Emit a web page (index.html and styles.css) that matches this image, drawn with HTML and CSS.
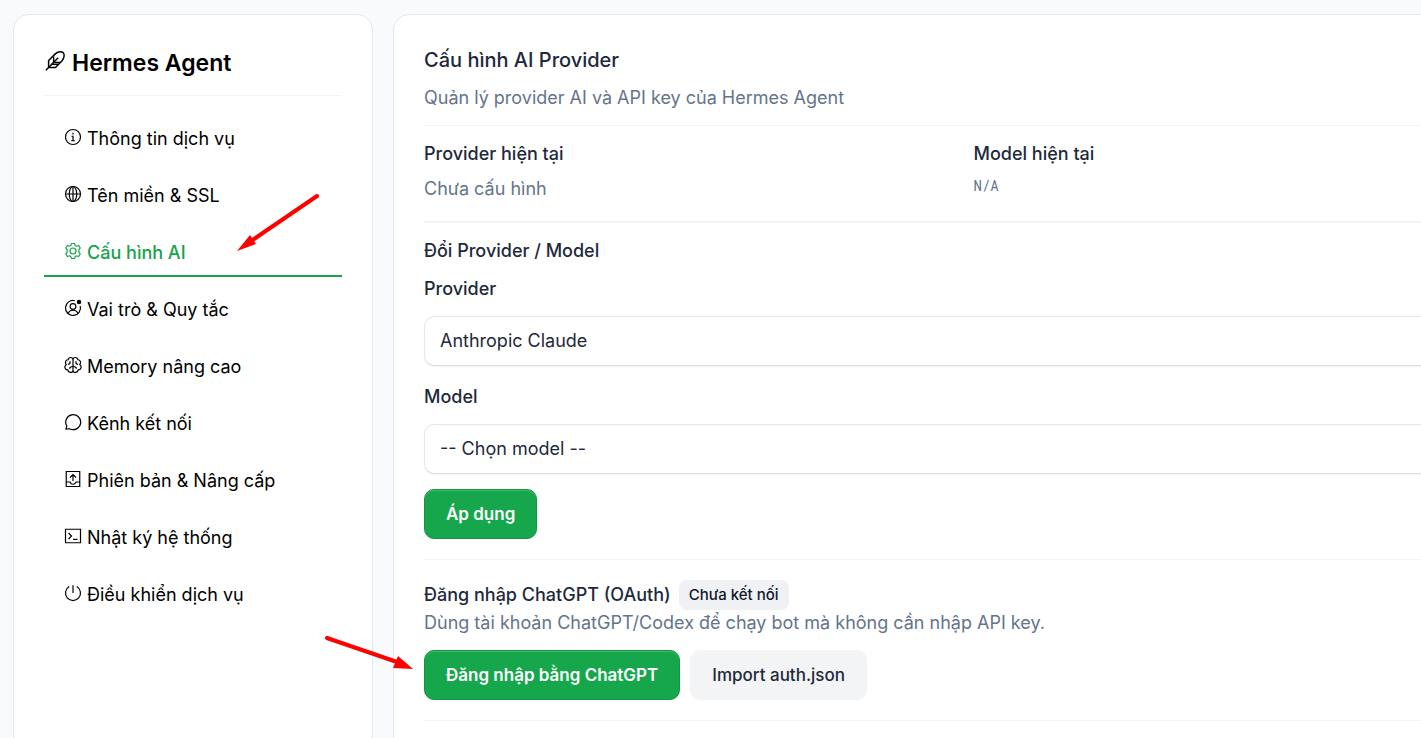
FILE: index.html
```html
<!DOCTYPE html>
<html lang="vi">
<head>
    <meta charset="UTF-8">
    <meta name="viewport" content="width=device-width, initial-scale=1.0">
    <title>Hermes Agent</title>
    <link rel="stylesheet" href="styles.css">
</head>
<body>
    <div class="layout">
        <aside class="card sidebar">
            <h1 class="brand">
                <svg class="brand-icon" viewBox="0 0 24 24"><path d="M2 22 15.500 8.500"/><path d="M5 19V11.500L12 4.500C15.500 1 19.500 1.500 21 3S22.500 8.500 19.500 12L12.500 19H5"/><path d="M10.500 13V7M11 13.500h7M8.500 15.500h7"/></svg>
                Hermes Agent
            </h1>
            <nav class="menu">
                <a href="#" class="menu-item">
                    <svg class="icon" viewBox="0 0 24 24"><circle cx="12" cy="12" r="10"/><path d="M12 6.300v2.200M10 11h2v6M9.500 17h5"/></svg>
                    Thông tin dịch vụ
                </a>
                <a href="#" class="menu-item">
                    <svg class="icon" viewBox="0 0 24 24"><circle cx="12" cy="12" r="10"/><ellipse cx="12" cy="12" rx="5" ry="10"/><path d="M2 12h20M12 2v20"/></svg>
                    Tên miền &amp; SSL
                </a>
                <a href="#" class="menu-item active">
                    <svg class="icon" viewBox="0 0 24 24"><path d="M10 2h4l1 2.800 1.500.8 2.900-.9 2.200 3.300-1.800 2.400v3.200l1.800 2.400-2.200 3.300-2.900-.9-1.500.8L14 22h-4l-1-2.800-1.500-.8-2.900.9L2.400 16l1.800-2.400v-3.200L2.400 8l2.200-3.300 2.900.9L9 4.800Z"/><circle cx="12" cy="12" r="4"/></svg>
                    Cấu hình AI
                </a>
                <a href="#" class="menu-item">
                    <svg class="icon" viewBox="0 0 24 24"><path d="M14.500 2.300A10 10 0 1 0 21.700 9.500"/><circle cx="12" cy="10" r="3.800"/><path d="M5.500 19.500C7 13.500 17 13.500 18.500 19.500"/><circle class="dot" cx="20" cy="4" r="3"/></svg>
                    Vai trò &amp; Quy tắc
                </a>
                <a href="#" class="menu-item">
                    <svg class="icon" viewBox="0 0 24 24"><path d="M12 5C12 1 6 1 5.500 5C2 5 1 9 3 11.500C-.5 14 1.500 18.500 5 18.500C6 23 12 23 12 19ZM12 5C12 1 18 1 18.500 5C22 5 23 9 21 11.500C24.500 14 22.500 18.500 19 18.500C18 23 12 23 12 19"/><path d="M8 7v2q0 2-3 2M16 7v2q0 2 3 2M7.500 17q0-3 4.500-3 4.500 0 4.500 3"/></svg>
                    Memory nâng cao
                </a>
                <a href="#" class="menu-item">
                    <svg class="icon" viewBox="0 0 24 24"><path d="M2.500 21.500 3.800 17.500A10 10 0 1 1 7.500 21Z"/></svg>
                    Kênh kết nối
                </a>
                <a href="#" class="menu-item">
                    <svg class="icon" viewBox="0 0 24 24"><path d="M3 2h18v20H3ZM3 16h5q1 3 4 3t4-3h5"/><path d="M12 14.500V7M8 10l4-4 4 4"/></svg>
                    Phiên bản &amp; Nâng cấp
                </a>
                <a href="#" class="menu-item">
                    <svg class="icon" viewBox="0 0 24 24"><path d="M2 3h20v18H2ZM6 8l4 4-4 4M12 16.500h6"/></svg>
                    Nhật ký hệ thống
                </a>
                <a href="#" class="menu-item">
                    <svg class="icon" viewBox="0 0 24 24"><path d="M7 3.400A10 10 0 1 0 17 3.400M12 1.500V12"/></svg>
                    Điều khiển dịch vụ
                </a>
            </nav>
        </aside>

        <main class="card content">
            <header class="content-header">
                <h2>Cấu hình AI Provider</h2>
                <p>Quản lý provider AI và API key của Hermes Agent</p>
            </header>

            <section class="current">
                <div>
                    <h3>Provider hiện tại</h3>
                    <p>Chưa cấu hình</p>
                </div>
                <div>
                    <h3>Model hiện tại</h3>
                    <code>N/A</code>
                </div>
            </section>

            <form class="change">
                <h3>Đổi Provider / Model</h3>
                <div class="field">
                    <label for="provider">Provider</label>
                    <select id="provider">
                        <option>Anthropic Claude</option>
                    </select>
                </div>
                <div class="field">
                    <label for="model">Model</label>
                    <select id="model">
                        <option>-- Chọn model --</option>
                    </select>
                </div>
                <button type="button" class="btn btn-primary">Áp dụng</button>
            </form>

            <section class="oauth">
                <div class="oauth-title">
                    <h3>Đăng nhập ChatGPT (OAuth)</h3>
                    <span class="badge">Chưa kết nối</span>
                </div>
                <p>Dùng tài khoản ChatGPT/Codex để chạy bot mà không cần nhập API key.</p>
                <div class="actions">
                    <button type="button" class="btn btn-primary">Đăng nhập bằng ChatGPT</button>
                    <button type="button" class="btn btn-light">Import auth.json</button>
                </div>
            </section>
        </main>
    </div>

    <!-- Arrows pointing at the menu item and the login button -->
    <svg class="arrow arrow-menu" viewBox="0 0 84 60"><path d="M80 4 14 49"/><path class="head" d="M0 59 13 43 19 52Z"/></svg>
    <svg class="arrow arrow-login" viewBox="0 0 90 36"><path d="M4 4 74 28"/><path class="head" d="M90 35 75 22 70 34Z"/></svg>
</body>
</html>
```
FILE: styles.css
```css
* {
    box-sizing: border-box;
}
body {
    margin: 0;
    padding: 14px 0 0 13px;
    font-family: Inter, sans-serif;
    font-size: 18px;
    line-height: 26px;
    color: #1e293b;
    background-color: #f9fafc;
    overflow-x: hidden;
}
h1, h2, h3, p {
    margin: 0;
}
h3 {
    font-size: 18px;
    font-weight: 500;
}
p {
    color: #64748b;
}
.layout {
    display: grid;
    grid-template-columns: 360px 1fr;
    gap: 20px;
    /* the content card runs past the right edge of the window */
    margin-right: -113px;
    min-height: 100vh;
}
.card {
    background: white;
    border: 1px solid #e2e8f0;
    border-radius: 16px;
    padding: 30px;
}
.brand {
    display: flex;
    align-items: center;
    gap: 6px;
    padding-bottom: 14px;
    border-bottom: 1px solid #f1f3f5;
    font-size: 23px;
    line-height: 36px;
    font-weight: 600;
    color: #000;
}
.brand-icon {
    width: 22px;
    height: 22px;
    margin-bottom: 4px;
}
svg {
    fill: none;
    stroke: currentColor;
    stroke-width: 1.6;
}
.menu {
    display: flex;
    flex-direction: column;
    gap: 9px;
    margin-top: 19px;
}
.menu-item {
    display: flex;
    align-items: center;
    gap: 5px;
    height: 48px;
    padding-top: 2px;
    padding-left: 20px;
    border-bottom: 2px solid transparent;
    color: #000;
    text-decoration: none;
}
.menu-item.active {
    color: #16a34a;
    border-bottom-color: #16a34a;
    font-weight: 500;
}
.icon {
    width: 18px;
    height: 18px;
    margin-bottom: 4px;
}
.dot {
    fill: currentColor;
    stroke: none;
}
.content-header {
    padding-bottom: 14px;
    border-bottom: 1px solid #f1f3f5;
}
.content-header h2 {
    margin-bottom: 10px;
    font-size: 20px;
    line-height: 30px;
    font-weight: 500;
}
.current {
    display: grid;
    grid-template-columns: 1fr 1fr;
    gap: 20px;
    padding: 15px 0 19px;
    border-bottom: 2px solid #f1f3f5;
}
.current h3 {
    margin-bottom: 9px;
}
.current code {
    display: block;
    font-family: "Roboto Mono", "Liberation Mono", monospace;
    font-size: 14px;
    line-height: 20px;
    color: #64748b;
}
.change {
    padding: 15px 0 20px;
    border-bottom: 1px solid #f1f3f5;
}
.field {
    margin-top: 12px;
    margin-bottom: 18px;
}
.field + .field {
    margin-bottom: 15px;
}
.field label {
    display: block;
    margin-bottom: 14px;
    font-weight: 500;
}
.field select {
    display: block;
    appearance: none;
    width: 100%;
    height: 50px;
    padding: 0 15px;
    border: 1px solid #e2e8f0;
    border-bottom-color: #d3dce8;
    border-radius: 10px;
    background: white;
    box-shadow: 0 1px 2px rgba(0, 0, 0, 0.05);
    font: inherit;
    color: #1e293b;
}
.btn {
    height: 50px;
    padding: 0 21px;
    border: 1px solid transparent;
    border-radius: 10px;
    font: inherit;
    font-size: 17px;
    font-weight: 500;
}
.btn-primary {
    display: block;
    background-color: #16a74c;
    border-color: #159447;
    box-shadow: inset 0 1px 0 rgba(255, 255, 255, 0.2);
    color: white;
    font-weight: 600;
}
.btn-light {
    background-color: #f3f4f6;
    color: #1e293b;
}
.oauth {
    padding: 20px 0;
    border-bottom: 1px solid #f1f3f5;
}
.oauth-title {
    display: flex;
    align-items: center;
    gap: 8px;
}
.badge {
    padding: 2px 10px;
    border-radius: 8px;
    background-color: #f0f1f5;
    color: #0f172a;
    font-size: 15px;
    font-weight: 500;
}
.actions {
    display: flex;
    gap: 10px;
    margin-top: 14px;
}
.arrow {
    position: absolute;
    stroke: #f00;
    stroke-width: 4;
    stroke-linecap: round;
}
.arrow .head {
    fill: #f00;
    stroke: none;
}
.arrow-menu {
    left: 237px;
    top: 192px;
    width: 84px;
    height: 60px;
}
.arrow-login {
    left: 323px;
    top: 634px;
    width: 90px;
    height: 36px;
}
```
